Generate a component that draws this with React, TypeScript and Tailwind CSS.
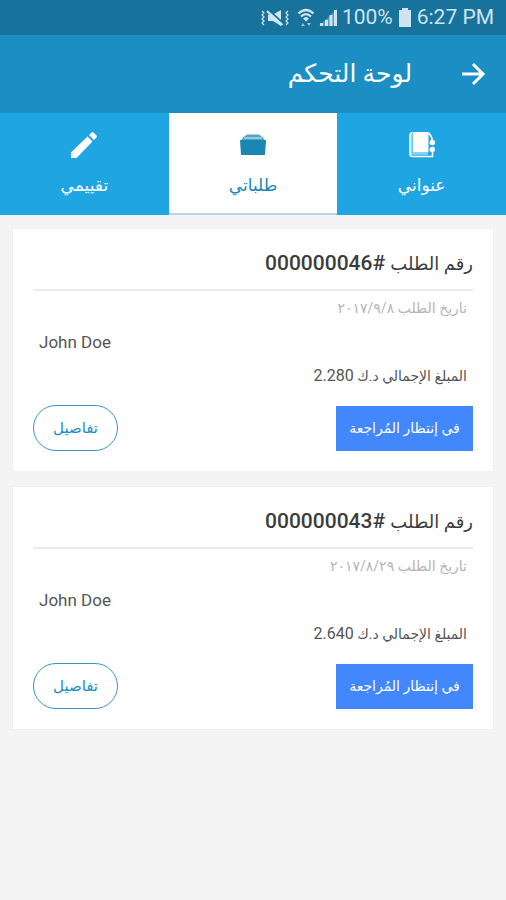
const orders = [
  { id: "000000046", date: "٢٠١٧/٩/٨", customer: "John Doe", total: "2.280" },
  { id: "000000043", date: "٢٠١٧/٨/٢٩", customer: "John Doe", total: "2.640" },
];

function StatusBar() {
  return (
    <div
      dir="ltr"
      className="flex h-[35px] items-center justify-end bg-[#17739c] pr-3 text-[21px] text-[#cfe4ef]"
    >
      {/* muted, vibrating */}
      <svg width="28" height="20" viewBox="0 0 28 20" fill="none" className="mr-2">
        <path d="M1 3l2 2-2 2 2 2-2 2 2 2-2 2 2 2M27 3l-2 2 2 2-2 2 2 2-2 2 2 2-2 2" stroke="currentColor" strokeWidth="1.200" />
        <path d="M7 6.500h5l8-4.500v16l-8-5H7z" fill="currentColor" />
        <path d="M8 2.500l14 12.500" stroke="#17739c" strokeWidth="2" />
        <path d="M6 3l15.500 14" stroke="currentColor" strokeWidth="2.200" />
      </svg>
      {/* wifi with transfer arrows */}
      <svg width="18" height="20" viewBox="0 0 18 20" fill="none" className="mr-1">
        <path d="M1.500 5.500Q9 -1.500 16.500 5.500" stroke="currentColor" strokeWidth="2.200" />
        <path d="M4 8.500Q9 3.500 14 8.500" stroke="currentColor" strokeWidth="2.200" />
        <path d="M6 10.500Q9 7.500 12 10.500L9 13.500z" fill="currentColor" />
        <path d="M4 18l2-3 2 3zM10 15h4l-2 3z" fill="currentColor" opacity="0.7" />
      </svg>
      <svg width="19" height="20" viewBox="0 0 19 20" fill="currentColor" className="mr-1">
        <path d="M0 18L18 1v17z" opacity="0.35" />
        <path d="M1 15h3v3H1zM6 12h3v6H6zM10.500 7h3v11h-3zM15 2h3v16h-3z" />
      </svg>
      <span className="mr-[6px]">100%</span>
      <svg width="12" height="19" viewBox="0 0 12 19" fill="currentColor" className="mr-[6px]">
        <path d="M3 0h6v2h3v17H0V2h3z" />
      </svg>
      <span>6:27 PM</span>
    </div>
  );
}

function BookIcon() {
  return (
    <svg width="28" height="28" viewBox="0 0 28 28" fill="none">
      <path d="M5 1h15.500v20.500H5z" fill="#fff" />
      <path d="M4.500 1.500Q2 1.800 2 4.500V23q0 2.500 2.500 2.500h20V20" stroke="#fff" strokeWidth="1.600" />
      <path d="M3.800 3v20H20" stroke="#a5d8f3" strokeWidth="1.600" />
      <path d="M20.500 1.800Q22.500 3.500 24 7.500V10" stroke="#fff" strokeWidth="1.600" />
      <circle cx="24.300" cy="11.500" r="2.700" fill="#fff" />
      <circle cx="24.300" cy="18.500" r="2.700" fill="#fff" />
    </svg>
  );
}

function FolderIcon() {
  return (
    <svg width="28" height="28" viewBox="0 0 28 28" fill="#1b86b3">
      <path d="M3 9q0-3 2.500-3.500Q7 3.500 9 3.500h10q2 0 3.500 2Q25 6 25 9z" opacity="0.75" />
      <path d="M5 7h18" stroke="#fff" strokeWidth="0.800" />
      <path d="M1 9h26L26 24H2z" />
    </svg>
  );
}

function PencilIcon() {
  return (
    <svg width="28" height="28" viewBox="0 0 28 28" fill="#fff">
      <path d="M1 21.500L17.500 5.500l5 5L6.500 27H1zM19 4l2.500-2.500q1-1 2 0l3 3q1 1 0 2L24 9z" />
    </svg>
  );
}

const tabs = [
  { label: "عنواني", icon: <BookIcon />, active: false },
  { label: "طلباتي", icon: <FolderIcon />, active: true },
  { label: "تقييمي", icon: <PencilIcon />, active: false },
];

function Tabs() {
  return (
    <nav className="grid grid-cols-3 bg-[#1fa5e2]">
      {tabs.map((tab) => (
        <button
          key={tab.label}
          type="button"
          className={
            tab.active
              ? "flex h-[102px] flex-col items-center gap-[14px] border-b-2 border-[#b9d3e8] bg-white pt-[18px] text-[17px] text-[#1b86b3]"
              : "flex h-[102px] flex-col items-center gap-[14px] pt-[18px] text-[17px] text-white"
          }
        >
          {tab.icon}
          <span>{tab.label}</span>
        </button>
      ))}
    </nav>
  );
}

function OrderCard({ order }: { order: (typeof orders)[number] }) {
  return (
    <article className="border border-[#efefef] bg-white px-5 pb-5 text-[#555]">
      <h2 className="flex h-[62px] items-center border-b-2 border-[#ebebeb] pt-[10px] text-[21px] font-medium text-[#3c3c3c]">
        <span>
          <span className="text-lg">رقم الطلب</span> #<bdi>{order.id}</bdi>
        </span>
      </h2>
      <div className="px-[6px]">
        <p className="h-[34px] text-sm leading-[34px] text-[#b5b5b5]">تاريخ الطلب {order.date}</p>
        <p dir="ltr" className="h-[34px] text-[17px] leading-[34px]">
          {order.customer}
        </p>
        <p className="h-[34px] text-sm leading-[34px]">
          المبلغ الإجمالي د.ك <span className="text-base">{order.total}</span>
        </p>
      </div>
      <div className="mt-3 flex items-center justify-between">
        <span className="flex h-[45px] w-[137px] items-center justify-center bg-[#4287fc] text-sm text-white">
          في إنتظار المُراجعة
        </span>
        <button
          type="button"
          className="h-[46px] w-[85px] rounded-full border border-[#3c93c4] text-[15px] text-[#1b8fc0]"
        >
          تفاصيل
        </button>
      </div>
    </article>
  );
}

export default function App() {
  return (
    <div
      dir="rtl"
      className="min-h-screen bg-[#f4f4f4] font-['Roboto','DejaVu_Sans',sans-serif]"
    >
      <StatusBar />
      <header className="flex h-[78px] items-center gap-12 bg-[#1b8fc3] px-5 text-white">
        <button type="button" aria-label="رجوع">
          <svg width="26" height="26" viewBox="0 0 26 26" fill="none" stroke="currentColor" strokeWidth="3">
            <path d="M2 13h21M13 3l10 10-10 10" />
          </svg>
        </button>
        <h1 className="text-[25px]">لوحة التحكم</h1>
      </header>
      <Tabs />
      <main className="flex flex-col gap-[14px] px-3 py-[13px]">
        {orders.map((order) => (
          <OrderCard key={order.id} order={order} />
        ))}
      </main>
    </div>
  );
}
